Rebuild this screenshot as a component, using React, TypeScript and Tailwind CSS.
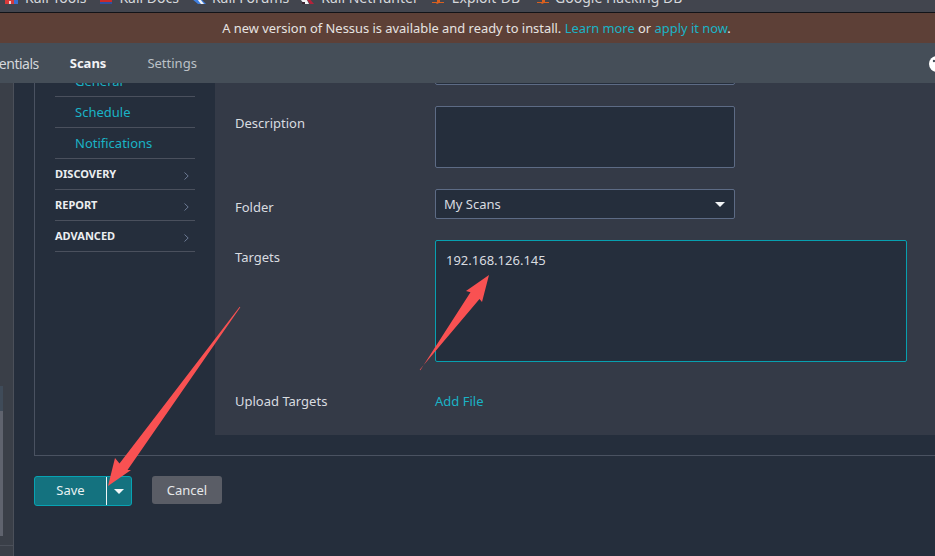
import React from "react";

function Bookmark({ ml, iconW, label, gap, icon }: { ml: string; iconW: number; label: string; gap: string; icon: React.ReactNode }) {
  return (
    <div className={`flex items-start shrink-0 ${ml}`}>
      <svg width={iconW} height="14" viewBox={`0 0 ${iconW} 14`} className="shrink-0">{icon}</svg>
      <span className={`text-[14px] leading-[16px] text-[#d6d8dc] whitespace-nowrap ${gap}`}>{label}</span>
    </div>
  );
}

function SideLink({ label }: { label: string }) {
  return (
    <div className="h-[31px] border-b border-[#4a505d] pl-[20px] pt-[1px] flex items-center">
      <span className="text-[13px] text-[#1ab3c6]">{label}</span>
    </div>
  );
}

function SideHead({ label }: { label: string }) {
  return (
    <div className="h-[31px] border-b border-[#4a505d] flex items-center justify-between pr-[6px]">
      <span className="text-[11px] font-bold text-[#eceef1]">{label}</span>
      <svg width="5" height="8" viewBox="0 0 5 8" className="mt-[3px]">
        <path d="M0.5 0.5 L4.2 4 L0.5 7.5" fill="none" stroke="#6d7b95" strokeWidth="1" />
      </svg>
    </div>
  );
}

export default function App() {
  return (
    <div className="relative w-[935px] h-[556px] overflow-hidden flex flex-col bg-[#252e3c] font-['Noto_Sans',sans-serif]">
      <div className="h-[13px] shrink-0 bg-[#42454e] border-b border-[#111318] overflow-hidden">
        <div className="flex items-start mt-[-10px]">
          <Bookmark ml="ml-[5px]" iconW={13} gap="ml-[7px]" label="Kali Tools" icon={<><rect x="0" y="9" width="9" height="5" fill="#d83a3a" /><rect x="4" y="11" width="2" height="3" fill="#f3d0d0" /><rect x="9" y="8" width="4" height="6" fill="#3a6fd0" /></>} />
          <Bookmark ml="ml-[14px]" iconW={12} gap="ml-[7px]" label="Kali Docs" icon={<><rect x="0" y="8" width="12" height="4" fill="#c92a2a" /><rect x="0" y="12" width="12" height="2" fill="#2f4fa0" /></>} />
          <Bookmark ml="ml-[13px]" iconW={14} gap="ml-[6px]" label="Kali Forums" icon={<><path d="M0 9h9l5 5H6z" fill="#3f7fe0" /><path d="M5 9h3l4 5H9z" fill="#f2f4f8" /></>} />
          <Bookmark ml="ml-[12px]" iconW={14} gap="ml-[6px]" label="Kali NetHunter" icon={<><path d="M0 10l5-2 3 6H3z" fill="#f1f1f4" /><path d="M5 8h3l5 6H9z" fill="#b5223a" /><rect x="1" y="12" width="3" height="2" fill="#3a2430" /></>} />
          <Bookmark ml="ml-[13px]" iconW={12} gap="ml-[8px]" label="Exploit-DB" icon={<path d="M0 12h12v1H7l-2 1-1-1H0zM5 10h3v2H5z" fill="#d9601f" />} />
          <Bookmark ml="ml-[17px]" iconW={12} gap="ml-[6px]" label="Google Hacking DB" icon={<path d="M0 12h12v1H7l-2 1-1-1H0zM5 10h3v2H5z" fill="#d9601f" />} />
        </div>
      </div>

      <div className="h-[30px] shrink-0 bg-[#5d4037] flex items-center justify-center text-[12.9px] text-[#e6e3e1] pl-[18px] pt-[1px]">
        <span>
          A new version of Nessus is available and ready to install. <span className="text-[#1ab3c6]">Learn more</span> or <span className="text-[#1ab3c6]">apply it now</span>.
        </span>
      </div>

      <div className="h-[40px] shrink-0 bg-[#454e58] flex items-center overflow-hidden pt-[1px]">
        <span className="text-[14px] tracking-[-0.5px] text-[#d5d8dc] ml-[-30px] whitespace-nowrap">Credentials</span>
        <span className="text-[13px] font-bold text-[#f2f3f5] ml-[31px]">Scans</span>
        <span className="text-[13px] text-[#bcc1c7] ml-[41px] pt-[1px]">Settings</span>
        <svg width="16" height="16" viewBox="0 0 16 16" className="ml-auto mr-[-10px] shrink-0">
          <circle cx="8" cy="8" r="8" fill="#ffffff" />
          <circle cx="5" cy="5" r="1.2" fill="#454e58" />
        </svg>
      </div>

      <div className="flex flex-1 min-h-0">
        <div className="relative w-[14px] shrink-0 bg-[#3a3f48] border-r border-[#4b505a] flex flex-col">
          <div className="w-[3px] mt-[303px] h-[25px] bg-[#3f4b59]" />
          <div className="w-[3px] h-[125px] bg-[#5f636e]" />
          <div className="mt-[9px] border-t border-[#4b505a]" />
        </div>

        <div className="flex-1 min-w-0 pl-[20px] flex flex-col">
          <div className="h-[373px] shrink-0 border-l border-b border-[#4a5261] pb-[20px] overflow-hidden">
            <div className="flex h-full overflow-hidden">
              <div className="w-[180px] shrink-0 px-[20px] mt-[-17px]">
                <SideLink label="General" />
                <SideLink label="Schedule" />
                <SideLink label="Notifications" />
                <SideHead label="DISCOVERY" />
                <SideHead label="REPORT" />
                <SideHead label="ADVANCED" />
              </div>
              <div className="flex-1 bg-[#343a47] pl-[20px] text-[13px] text-[#d9dce0]">
                <div className="mt-[-28px] flex flex-col gap-[21px]">
                  <div className="h-[30px] ml-[200px] w-[300px] rounded-[2px] border border-[#5d6b85] bg-[#252e3c]" />
                  <div className="flex items-start">
                    <div className="w-[200px] pt-[8px]">Description</div>
                    <div className="w-[300px] h-[62px] rounded-[2px] border border-[#5d6b85] bg-[#252e3c]" />
                  </div>
                  <div className="flex items-start">
                    <div className="w-[200px] pt-[9px]">Folder</div>
                    <div className="w-[300px] h-[30px] rounded-[2px] border border-[#5d6b85] bg-[#252e3c] flex items-center justify-between pl-[8px] pr-[9px]">
                      <span className="pt-[1px]">My Scans</span>
                      <svg width="10" height="5" viewBox="0 0 10 5"><path d="M0 0h10L5 5z" fill="#f2f4f6" /></svg>
                    </div>
                  </div>
                  <div className="flex items-start">
                    <div className="w-[200px] pt-[8px]">Targets</div>
                    <div className="w-[472px] h-[122px] rounded-[2px] border border-[#07a0b0] bg-[#252e3c] pl-[10px] pt-[10px]">192.168.126.145</div>
                  </div>
                  <div className="flex items-center mt-[9px]">
                    <div className="w-[200px]">Upload Targets</div>
                    <span className="text-[#1ab3c6]">Add File</span>
                  </div>
                </div>
              </div>
            </div>
          </div>

          <div className="flex items-start mt-[20px]">
            <div className="flex h-[30px] w-[98px] rounded-[3px] border border-[#07a3b3] bg-[#14727f] text-[13px] text-[#e8f1f2] overflow-hidden">
              <div className="w-[72px] flex items-center justify-center border-r border-[#eef5f6]">Save</div>
              <div className="flex-1 flex items-center justify-center">
                <svg width="10" height="5" viewBox="0 0 10 5"><path d="M0 0h10L5 5z" fill="#f2f6f7" /></svg>
              </div>
            </div>
            <div className="ml-[20px] w-[70px] h-[28px] rounded-[3px] bg-[#5a5d66] text-[13px] text-[#e6e7e9] pt-[1px] flex items-center justify-center">Cancel</div>
          </div>
        </div>
      </div>

      <svg width="935" height="556" viewBox="0 0 935 556" className="absolute left-0 top-0 pointer-events-none">
        <path d="M419.7 369.8 L420.3 370.2 L470.5 292.3 L466 291 L489 275 L482 302 L479.5 299 Z" fill="#f95152" />
        <path d="M239.7 306.8 L240.3 307.2 L127.5 470 L131 470 L108 486 L115 458 L119.5 463.5 Z" fill="#f95152" />
      </svg>
    </div>
  );
}
